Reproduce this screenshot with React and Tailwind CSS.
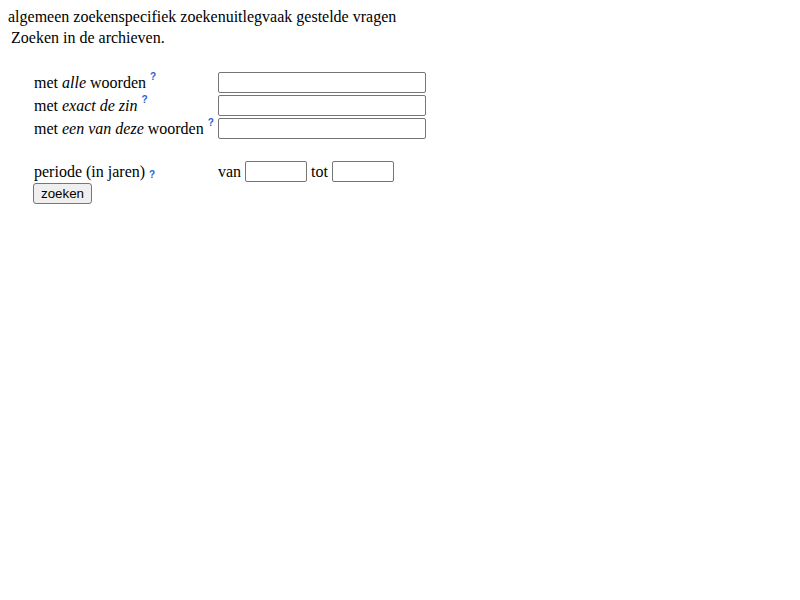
export default function App() {
  const Help = ({ low }) => (
    <span
      className={`inline-block text-[10px] font-bold leading-none text-[#2563d6] ml-[4px] ${low ? "relative top-[1px]" : "relative top-[-8px]"}`}
      style={{ fontFamily: '"Liberation Sans", Arial, sans-serif' }}
    >
      ?
    </span>
  );
  const inputCls =
    "block h-[21px] border border-[#767676] rounded-[2px] bg-white px-[2px] text-[13px] outline-none";
  return (
    <div
      className="min-h-[600px] bg-white text-black text-[16px] leading-[18px] px-[8px] pt-[8px]"
      style={{ fontFamily: '"Liberation Serif", "Times New Roman", serif' }}
    >
      <div className="h-[19px]">algemeen zoekenspecifiek zoekenuitlegvaak gestelde vragen</div>
      <div className="mt-[2px] pl-[3px] h-[19px]">Zoeken in de archieven.</div>
      <div className="mt-[23px] ml-[26px]">
        <div className="flex items-center h-[23px]">
          <div className="w-[184px]">
            met <i>alle</i> woorden<Help />
          </div>
          <input className={`${inputCls} w-[208px]`} />
        </div>
        <div className="flex items-center h-[23px]">
          <div className="w-[184px]">
            met <i>exact de zin</i><Help />
          </div>
          <input className={`${inputCls} w-[208px]`} />
        </div>
        <div className="flex items-center h-[23px]">
          <div className="w-[184px]">
            met <i>een van deze</i> woorden<Help />
          </div>
          <input className={`${inputCls} w-[208px]`} />
        </div>
        <div className="h-[20px]"></div>
        <div className="flex items-center h-[23px]">
          <div className="w-[184px]">
            periode (in jaren)<Help low />
          </div>
          <span className="mr-[4px]">van</span>
          <input className={`${inputCls} w-[62px]`} />
          <span className="mx-[4px]">tot</span>
          <input className={`${inputCls} w-[62px]`} />
        </div>
        <button
          className="-ml-[1px] h-[21px] px-[7px] text-[13.33px] leading-none border border-[#767676] rounded-[3px] bg-[#efefef]"
          style={{ fontFamily: '"Liberation Sans", Arial, sans-serif' }}
        >
          zoeken
        </button>
      </div>
    </div>
  );
}
